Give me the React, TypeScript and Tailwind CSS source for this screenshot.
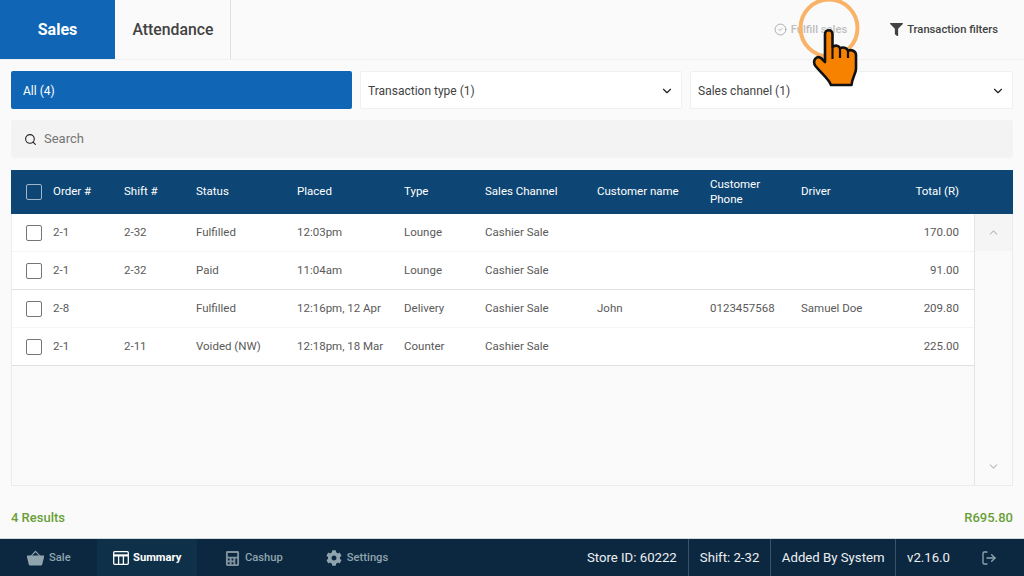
import { ChevronDown, ChevronUp, Search, CircleCheck, LogOut } from "lucide-react";
import { FaCalculator, FaCog, FaFilter } from "react-icons/fa";

const rows = [
  { order: "2-1", shift: "2-32", status: "Fulfilled", placed: "12:03pm", type: "Lounge", channel: "Cashier Sale", name: "", phone: "", driver: "", total: "170.00" },
  { order: "2-1", shift: "2-32", status: "Paid", placed: "11:04am", type: "Lounge", channel: "Cashier Sale", name: "", phone: "", driver: "", total: "91.00" },
  { order: "2-8", shift: "", status: "Fulfilled", placed: "12:16pm, 12 Apr", type: "Delivery", channel: "Cashier Sale", name: "John", phone: "0123457568", driver: "Samuel Doe", total: "209.80" },
  { order: "2-1", shift: "2-11", status: "Voided (NW)", placed: "12:18pm, 18 Mar", type: "Counter", channel: "Cashier Sale", name: "", phone: "", driver: "", total: "225.00" },
];

const gridCols = "grid grid-cols-[41px_71px_72px_101px_107px_81px_112px_113px_91px_80px_1fr] items-center";

const App = () => {
  return (
    <div className="relative w-[1024px] h-[576px] overflow-hidden flex flex-col bg-[#fafafa] font-['Roboto',sans-serif]">
      {/* Top tabs */}
      <div className="h-[60px] shrink-0 flex items-stretch border-b border-[#f0f0f0]">
        <div className="w-[115px] bg-[#1066b4] text-white text-[16px] font-bold flex items-center justify-center">Sales</div>
        <div className="w-[116px] pl-px border-r border-[#e0e0e0] text-[#424242] text-[15.8px] font-medium flex items-center justify-center">Attendance</div>
        <div className="flex-1 flex items-center justify-end pr-[26px] pt-px">
          <div className="flex items-center gap-[4px] text-[11.2px] font-medium text-[#bdbdbd]">
            <CircleCheck size={13} strokeWidth={1.5} className="text-[#9e9e9e]" />
            Fulfill sales
          </div>
          <div className="flex items-center gap-[4px] ml-[43px] text-[11.2px] font-medium text-[#424242]">
            <FaFilter size={13} className="text-[#424242]" />
            Transaction filters
          </div>
        </div>
      </div>

      <div className="flex-1 flex flex-col px-[11px] pt-[11px]">
        {/* Filters */}
        <div className="flex h-[38px] gap-2 shrink-0">
          <div className="w-[341px] bg-[#1066b4] rounded-[2px] text-white text-[12px] flex items-center pl-3 pt-px">All (4)</div>
          <div className="w-[322px] bg-white rounded-[2px] border border-[#f0f0f0] text-[#424242] text-[12px] flex items-center justify-between pl-[7px] pr-[7px] pt-px">
            Transaction type (1)
            <ChevronDown size={14} className="text-[#212121]" />
          </div>
          <div className="flex-1 bg-white rounded-[2px] border border-[#f0f0f0] text-[#424242] text-[12px] flex items-center justify-between pl-[7px] pr-[7px] pt-px">
            Sales channel (1)
            <ChevronDown size={14} className="text-[#212121]" />
          </div>
        </div>

        {/* Search */}
        <div className="mt-[11px] h-[38px] shrink-0 bg-[#f3f3f3] rounded-[2px] flex items-center pl-[13px] gap-[7px] text-[13px] text-[#757575]">
          <Search size={13} strokeWidth={2} className="text-[#212121]" />
          Search
        </div>

        {/* Table */}
        <div className="mt-[12px] flex-1 flex flex-col border-x border-b border-[#ececec]">
          <div className={`${gridCols} h-[44px] shrink-0 bg-[#0d4674] text-white text-[11.5px] -mx-px pl-px`}>
            <div className="pl-[14px]"><div className="w-4 h-4 rounded-[2px] border border-[#9fb6c9]" /></div>
            <div>Order #</div>
            <div>Shift #</div>
            <div>Status</div>
            <div>Placed</div>
            <div>Type</div>
            <div>Sales Channel</div>
            <div>Customer name</div>
            <div className="leading-[15px]">Customer<br />Phone</div>
            <div>Driver</div>
            <div className="text-right pr-[54px]">Total (R)</div>
          </div>
          <div className="flex-1 flex">
            <div className="w-[963px] border-r border-[#e4e4e4]">
              {rows.map((r, i) => (
                <div key={i} className={`${gridCols} h-[38px] bg-white text-[#5a5a5a] text-[11.5px] border-b ${i === 1 || i === 3 ? "border-[#e0e0e0]" : "border-[#f5f5f5]"}`}>
                  <div className="pl-[14px]"><div className="w-4 h-4 rounded-[2px] border border-[#757575] bg-white" /></div>
                  <div>{r.order}</div>
                  <div>{r.shift}</div>
                  <div>{r.status}</div>
                  <div>{r.placed}</div>
                  <div>{r.type}</div>
                  <div>{r.channel}</div>
                  <div>{r.name}</div>
                  <div>{r.phone}</div>
                  <div>{r.driver}</div>
                  <div className="text-right pr-[15px]">{r.total}</div>
                </div>
              ))}
            </div>
            <div className="flex-1 flex flex-col justify-between">
              <div className="h-[37px] bg-[#f5f5f5] flex items-center justify-center"><ChevronUp size={13} className="text-[#bdbdbd]" /></div>
              <div className="h-[37px] flex items-center justify-center"><ChevronDown size={13} className="text-[#bdbdbd]" /></div>
            </div>
          </div>
        </div>

        {/* Results */}
        <div className="h-[52px] shrink-0 flex items-center justify-between text-[13px] font-medium text-[#689f38] pt-[11px]">
          <span>4 Results</span>
          <span>R695.80</span>
        </div>
      </div>

      {/* Bottom bar */}
      <div className="h-[38px] shrink-0 bg-[#0c2840] border-t border-[#cfd8dc] flex items-stretch text-[11.2px]">
        <div className="w-[97px] flex items-center pl-[27px] pt-px gap-[5px] text-[#90a4ae] font-medium">
          <svg width="17" height="16" viewBox="0 0 17 16" fill="#90a4ae">
            <path d="M3.4 6 L8.5 0.4 L13.6 6 L12.2 6 L8.5 2.2 L4.8 6 Z" />
            <path d="M0 5.6 H17 V7.2 L15.2 14.6 Q15 15.6 14 15.6 H3 Q2 15.6 1.8 14.6 L0 7.2 Z" />
          </svg>
          Sale
        </div>
        <div className="w-[100px] bg-[#0f3049] flex items-center pl-[16px] pt-px gap-[4px] text-white font-bold">
          <svg width="16" height="14" viewBox="0 0 16 14" fill="none" stroke="#fff" strokeWidth="1.3">
            <rect x="0.7" y="0.7" width="14.6" height="12.6" rx="1" />
            <path d="M0.7 4.4H15.3" strokeWidth="2.2" />
            <path d="M5.6 4.4V13.3M10.4 4.4V13.3" />
          </svg>
          Summary
        </div>
        <div className="ml-[28px] flex items-center pt-px gap-[5px] text-[#90a4ae] font-medium">
          <FaCalculator size={15} className="text-[#7f929e]" />Cashup
        </div>
        <div className="ml-[43px] flex items-center pt-px gap-[5px] text-[#90a4ae] font-medium">
          <FaCog size={16} className="text-[#90a4ae]" />Settings
        </div>
        <div className="ml-auto flex items-stretch text-[13.2px] text-[#eceff1]">
          <div className="flex items-center pr-[11px] border-r border-[#3a5368]">Store ID: 60222</div>
          <div className="flex items-center px-[11px] border-r border-[#3a5368]">Shift: 2-32</div>
          <div className="flex items-center px-[10.5px] border-r border-[#3a5368]">Added By System</div>
          <div className="flex items-center pl-[11px] pr-[31px]">v2.16.0</div>
          <div className="flex items-center pr-[27px]"><LogOut size={16} className="text-[#90a4ae]" /></div>
        </div>
      </div>

      {/* Tap highlight and pointer */}
      <svg className="absolute left-[796px] top-[-8px]" width="70" height="100" viewBox="796 -8 70 100">
        <circle cx="829" cy="28" r="28.5" fill="none" stroke="#f9b368" strokeWidth="4" />
        <path d="M825 34 C825 29 832.5 29 832.5 34 L832.5 47 C835 45 839 45 840 48.5 C842 47 847 47 848 51 C851 49 856 51 856 55 L856 69 C856 73 852 78 851.5 85 L831 85 C829 79 821 73 815.5 66 C812 61 816 55 821 58 L825 62 Z" fill="#f78200" stroke="#111" strokeWidth="2.6" strokeLinejoin="round" />
        <path d="M832.5 47 L832.5 59 M840 48.5 L840 58 M848 51 L848 58" stroke="#111" strokeWidth="2.2" fill="none" />
      </svg>
    </div>
  );
};

export default App;
